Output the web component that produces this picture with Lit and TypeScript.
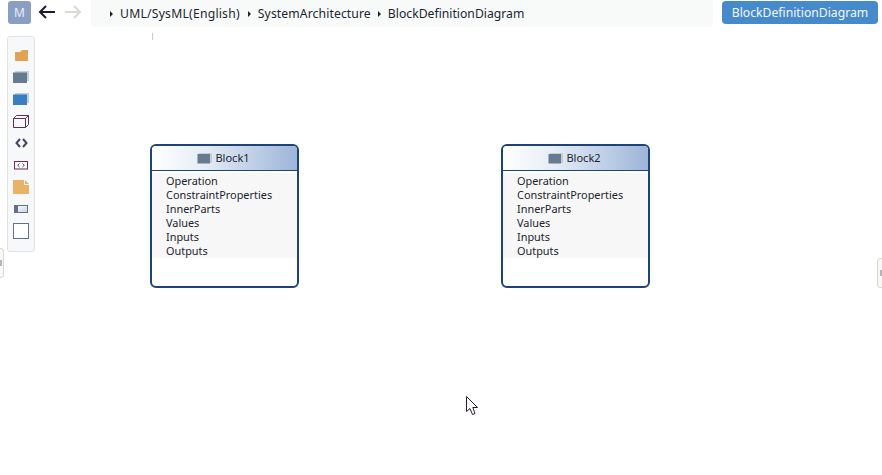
import { LitElement, html, css, svg } from "lit";
import { customElement } from "lit/decorators.js";

const blockIcon = (front: string, back: string) => svg`<svg class="ic" width="16" height="12" viewBox="0 0 16 12">
  <path d="M2 1H15V11H13V3H2Z" fill="${back}"/><rect x="0.5" y="2" width="12.5" height="9.5" fill="${front}"/></svg>`;

@customElement("app-root")
export class AppRoot extends LitElement {
  static styles = css`
    :host { display: block; width: 882px; height: 475px; position: relative; overflow: hidden; background: #fff;
      font-family: "Noto Sans", "Open Sans", sans-serif; color: #1c2430; }
    .top { display: flex; align-items: flex-start; height: 27px; padding-top: 1px; box-sizing: border-box; }
    .m { width: 23px; height: 23px; margin-left: 8px; border-radius: 3px; background: #8b9fc3; color: #e9edf5;
      font-size: 12px; display: flex; align-items: center; justify-content: center; }
    .nav { display: flex; gap: 8px; margin-left: 7px; margin-top: 3px; }
    .crumbs { margin-left: 9px; width: 622px; height: 27px; margin-top: -1px; background: #f8fafa; border-radius: 0 0 4px 4px;
      display: flex; align-items: center; padding-left: 18px; box-sizing: border-box; font-size: 12.2px; gap: 6px; }
    .tri { width: 0; height: 0; border-left: 3px solid #222; border-top: 3px solid transparent; border-bottom: 3px solid transparent; margin-left: 1px; margin-right: 1px; }
    .wide { letter-spacing: 0.22px; margin-right: 1px; }
    .mid { letter-spacing: 0.1px; }
    .btn { margin-left: 9px; width: 156px; height: 23px; background: #478acb; color: #f4f8fc; border-radius: 4px;
      font-size: 12.2px; display: flex; align-items: center; justify-content: center; }
    .tick { position: absolute; left: 152px; top: 33px; width: 1px; height: 7px; background: #c9c9c9; }
    .tools { position: absolute; left: 7px; top: 36px; width: 28px; height: 216px; box-sizing: border-box;
      background: #f6f8f9; border: 1px solid #e2e4e4; border-radius: 3px; display: flex; flex-direction: column; align-items: center; }
    .slot { height: 22px; display: flex; align-items: center; justify-content: center; flex: none; }
    .slot:first-child { margin-top: 7px; }
    .tab { position: absolute; width: 10px; height: 30px; box-sizing: border-box; background: #f6f8f9; border: 1px solid #dcd9c8; display: flex; align-items: center; }
    .tab i { display: block; width: 2px; height: 6px; background: #b5b5b5; }
    .tab.l { left: -6px; top: 248px; border-radius: 0 3px 3px 0; justify-content: flex-end; padding-right: 1px; }
    .tab.r { left: 877px; top: 258px; border-radius: 3px 0 0 3px; padding-left: 2px; }
    .block { position: absolute; top: 144px; width: 149px; height: 144px; box-sizing: border-box; border: 2px solid #1c4479; border-radius: 6px; background: #fff; overflow: hidden; }
    .head { height: 25px; box-sizing: border-box; border-bottom: 1px solid #1c4479; padding-right: 2px; background: linear-gradient(90deg, #fff 0%, #e6edf6 35%, #9db5d9 100%);
      display: flex; align-items: center; justify-content: center; gap: 2px; font-size: 11px; }
    .head span { position: relative; top: -1px; }
    .body { margin-top: 2px; background: #f7f7f7; height: 85px; padding-left: 14px; padding-top: 1px; box-sizing: border-box; font-size: 10.9px; line-height: 14px; }
    .cursor { position: absolute; left: 466px; top: 396px; }
    svg { display: block; }
  `;

  block(name: string, left: number) {
    return html`<div class="block" style="left:${left}px">
      <div class="head">${blockIcon("#667a90", "#c5ccd6")}<span>${name}</span></div>
      <div class="body">${["Operation", "ConstraintProperties", "InnerParts", "Values", "Inputs", "Outputs"].map((t) => html`<div>${t}</div>`)}</div>
    </div>`;
  }

  render() {
    return html`
      <div class="top">
        <div class="m">M</div>
        <div class="nav">
          <svg width="18" height="16" viewBox="0 0 18 16"><path d="M17 8H2M8 2L2 8L8 14" fill="none" stroke="#1d1a33" stroke-width="2"/></svg>
          <svg width="18" height="16" viewBox="0 0 18 16"><path d="M1 8H16M10 2L16 8L10 14" fill="none" stroke="#d9dcd4" stroke-width="2"/></svg>
        </div>
        <div class="crumbs">
          <span class="tri"></span><span class="wide">UML/SysML(English)</span>
          <span class="tri"></span><span class="mid">SystemArchitecture</span>
          <span class="tri"></span><span>BlockDefinitionDiagram</span>
        </div>
        <div class="btn">BlockDefinitionDiagram</div>
      </div>
      <div class="tick"></div>
      <div class="tools">
        <div class="slot"><svg width="13" height="12" viewBox="0 0 13 12"><path d="M0 3H5L7 1H13V12H0Z" fill="#e0a352"/></svg></div>
        <div class="slot"><svg width="16" height="12" viewBox="0 0 16 12"><path d="M2 0H16V10H14V2H2Z" fill="#c9cfd8"/><rect x="0" y="1.5" width="14" height="10.5" fill="#667a90"/></svg></div>
        <div class="slot"><svg width="16" height="12" viewBox="0 0 16 12"><path d="M2 0H16V10H14V2H2Z" fill="#b9cfe6"/><rect x="0" y="1.5" width="14" height="10.5" fill="#3a7dc0"/></svg></div>
        <div class="slot"><svg width="16" height="13" viewBox="0 0 16 13"><path d="M.5 3.5H12.5V12.5H.5ZM.5 3.5L3.5.5H15.5V9.5L12.5 12.5M12.5 3.5L15.5.5" fill="none" stroke="#5e2f55"/></svg></div>
        <div class="slot"><svg width="13" height="10" viewBox="0 0 13 10"><path d="M5 1L1.5 5L5 9M8 1L11.5 5L8 9" fill="none" stroke="#4a4168" stroke-width="2"/></svg></div>
        <div class="slot"><svg width="14" height="9" viewBox="0 0 14 9"><rect x=".5" y=".5" width="13" height="7.5" fill="none" stroke="#6c2c5e"/><path d="M5.5 2.5L3.7 4.3L5.5 6M8.5 2.5L10.3 4.3L8.5 6" fill="none" stroke="#555"/></svg></div>
        <div class="slot"><svg width="16" height="14" viewBox="0 0 16 14"><path d="M0 0H11V5H16V14H0Z" fill="#ebb267"/><path d="M12 0L16 4H12Z" fill="#ebb267"/></svg></div>
        <div class="slot"><svg width="14" height="8" viewBox="0 0 14 8"><defs><linearGradient id="g" x1="0" x2="1" y1="0" y2="1"><stop offset="0" stop-color="#fff"/><stop offset="1" stop-color="#c9d2e4"/></linearGradient></defs><rect x=".5" y=".5" width="13" height="7" fill="url(#g)" stroke="#5f7288"/><rect x="0" y="0" width="4" height="8" fill="#5f7288"/></svg></div>
        <div class="slot"><svg width="16" height="16" viewBox="0 0 16 16"><rect x=".5" y=".5" width="15" height="15" fill="#fff" stroke="#5f7288"/></svg></div>
      </div>
      <div class="tab l"><i></i></div>
      <div class="tab r"><i></i></div>
      ${this.block("Block1", 150)}
      ${this.block("Block2", 501)}
      <svg class="cursor" width="13" height="20" viewBox="0 0 13 20"><path d="M.5 .5V15.5L4 12.5L6.5 18.5L9 17.5L6.8 11.5H11.5Z" fill="#fff" stroke="#2a1f33"/></svg>
    `;
  }
}
